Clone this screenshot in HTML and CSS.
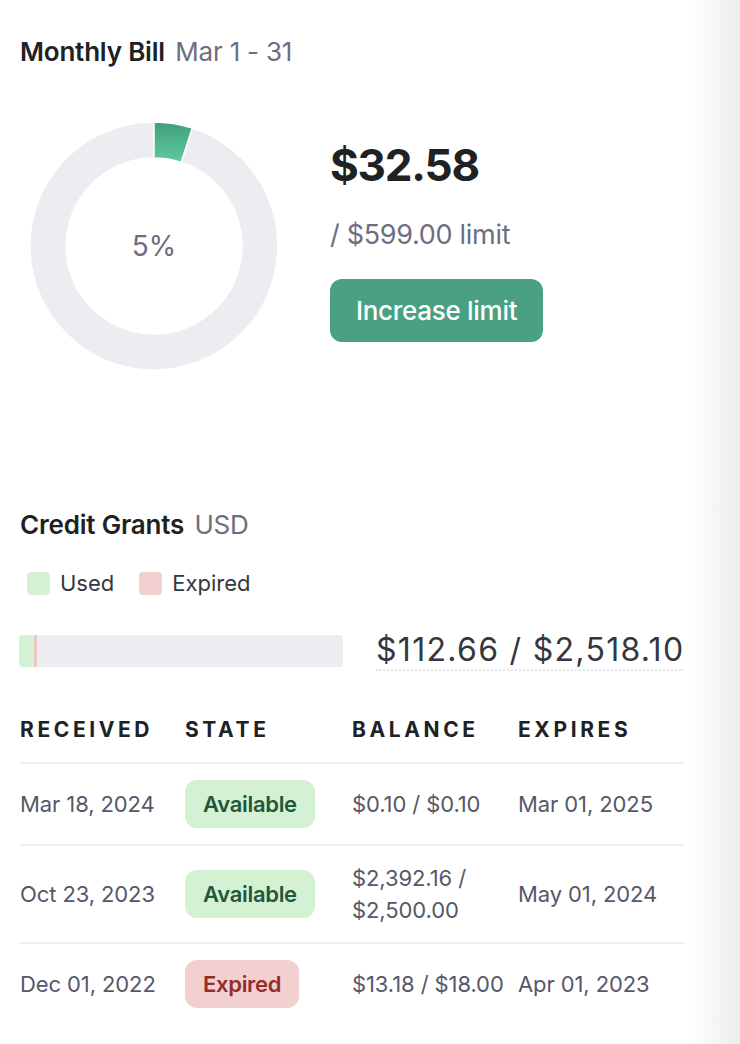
FILE: index.html
```html
<!DOCTYPE html>
<html lang="en">
<head>
  <meta charset="UTF-8" />
  <meta name="viewport" content="width=device-width, initial-scale=1" />
  <title>Usage</title>
  <link rel="stylesheet" href="styles.css">
</head>
<body>

  <section class="bill">
    <h2 class="titulo">Monthly Bill <span class="sub">Mar 1 - 31</span></h2>

    <div class="billRow">
      <div class="donut">
        <svg width="250" height="250" viewBox="0 0 250 250">
          <defs>
            <linearGradient id="verde" x1="0" y1="0" x2="0" y2="1">
              <stop offset="0" stop-color="#3f9f7c" />
              <stop offset="1" stop-color="#62c9a0" />
            </linearGradient>
          </defs>
          <path d="M163.3 7.1 A124 124 0 1 1 125 1 L125 37 A88 88 0 1 0 152.2 41.3 Z" fill="#ececf1" stroke="#fff" stroke-width="1.5" />
          <path d="M125 1 A124 124 0 0 1 163.3 7.1 L152.2 41.3 A88 88 0 0 0 125 37 Z" fill="url(#verde)" stroke="#fff" stroke-width="1.5" />
        </svg>
        <div class="donutTexto">5%</div>
      </div>

      <div class="billInfo">
        <div class="monto">$32.58</div>
        <div class="limite">/ $599.00 limit</div>
        <button class="btnLimite">Increase limit</button>
      </div>
    </div>
  </section>

  <section class="grants">
    <h2 class="titulo">Credit Grants <span class="sub">USD</span></h2>

    <div class="leyenda">
      <span class="item"><span class="cuadro usado"></span>Used</span>
      <span class="item"><span class="cuadro vencido"></span>Expired</span>
    </div>

    <div class="barraFila">
      <div class="barra">
        <div class="barraUsado" style="width: 15px"></div>
        <div class="barraVencido" style="width: 3px"></div>
      </div>
      <div class="total">$112.66 / $2,518.10</div>
    </div>

    <table class="tabla">
      <thead>
        <tr>
          <th>Received</th>
          <th>State</th>
          <th>Balance</th>
          <th>Expires</th>
        </tr>
      </thead>
      <tbody>
        <tr>
          <td>Mar 18, 2024</td>
          <td><span class="estado disponible">Available</span></td>
          <td>$0.10 / $0.10</td>
          <td>Mar 01, 2025</td>
        </tr>
        <tr>
          <td>Oct 23, 2023</td>
          <td><span class="estado disponible">Available</span></td>
          <td>$2,392.16 /<br>$2,500.00</td>
          <td>May 01, 2024</td>
        </tr>
        <tr>
          <td>Dec 01, 2022</td>
          <td><span class="estado expirado">Expired</span></td>
          <td>$13.18 / $18.00</td>
          <td>Apr 01, 2023</td>
        </tr>
      </tbody>
    </table>
  </section>

</body>
</html>
```

FILE: styles.css
```css
html {
  background: linear-gradient(to right, #ffffff 0, #ffffff 688px, #ededed 740px);
  min-height: 100%;
}
body {
  margin: 0;
  padding: 36px 20px 0 20px;
  font-family: Inter, 'Noto Sans', sans-serif;
  color: #353740;
}
.titulo {
  margin: 0;
  font-size: 26px;
  font-weight: 600;
  color: #202123;
  letter-spacing: -0.2px;
}
.sub {
  margin-left: 4px;
  font-weight: 400;
  color: #6e6e80;
}
.billRow {
  display: flex;
  align-items: flex-start;
  margin-top: 54px;
}
.donut {
  position: relative;
  width: 250px;
  height: 250px;
  margin-left: 9px;
}
.donut svg {
  display: block;
}
.donutTexto {
  position: absolute;
  inset: 0;
  display: flex;
  align-items: center;
  justify-content: center;
  font-size: 28px;
  color: #6e6e80;
}
.billInfo {
  margin-left: 51px;
  padding-top: 16px;
}
.monto {
  font-size: 44px;
  font-weight: 700;
  color: #202123;
  letter-spacing: -1.2px;
  line-height: 56px;
}
.limite {
  margin-top: 25px;
  font-size: 27px;
  color: #6e6e80;
  letter-spacing: -0.3px;
}
.btnLimite {
  margin-top: 28px;
  background-color: #4aa181;
  border: none;
  color: #fff;
  font-family: inherit;
  font-size: 26px;
  font-weight: 500;
  padding: 0 26px;
  height: 63px;
  border-radius: 12px;
  letter-spacing: -0.3px;
}
.grants {
  margin-top: 138px;
}
.leyenda {
  display: flex;
  gap: 25px;
  margin-top: 30px;
  margin-left: 7px;
}
.item {
  display: flex;
  align-items: center;
  font-size: 22px;
  color: #353740;
}
.cuadro {
  width: 23px;
  height: 23px;
  border-radius: 4px;
  margin-right: 10px;
}
.usado {
  background-color: #d4f2d3;
}
.vencido {
  background-color: #f2d0d0;
}
.barraFila {
  display: flex;
  align-items: center;
  margin-top: 35px;
}
.barra {
  display: flex;
  width: 324px;
  height: 32px;
  background-color: #ececf1;
  border-radius: 4px;
  overflow: hidden;
  margin-left: -1px;
}
.barraUsado {
  background-color: #d4f2d3;
}
.barraVencido {
  background-color: #f0c4c4;
}
.total {
  margin-left: 33px;
  font-size: 32px;
  letter-spacing: 1.3px;
  color: #353740;
  border-bottom: 2px dotted #e3e3e8;
  line-height: 38px;
}
.tabla {
  width: 664px;
  margin-top: 46px;
  border-collapse: collapse;
  table-layout: fixed;
}
.tabla th {
  text-align: left;
  text-transform: uppercase;
  font-size: 21px;
  font-weight: 700;
  letter-spacing: 3.6px;
  color: #202123;
  padding: 0 0 20px 0;
  border-bottom: 2px solid #ececf1;
}
.tabla th:nth-child(1) { width: 165px; }
.tabla th:nth-child(2) { width: 167px; }
.tabla th:nth-child(3) { width: 166px; }
.tabla td {
  font-size: 22px;
  color: #565869;
  padding: 16px 0;
  letter-spacing: -0.1px;
  line-height: 32px;
  vertical-align: middle;
}
.tabla tbody tr + tr td {
  border-top: 2px solid #ececf1;
}
.estado {
  display: inline-block;
  padding: 0 18px;
  height: 48px;
  line-height: 48px;
  border-radius: 12px;
  font-weight: 600;
  letter-spacing: -0.3px;
}
.disponible {
  background-color: #d4f2d3;
  color: #22573a;
}
.expirado {
  background-color: #f2d0d0;
  color: #962d2d;
}
```
